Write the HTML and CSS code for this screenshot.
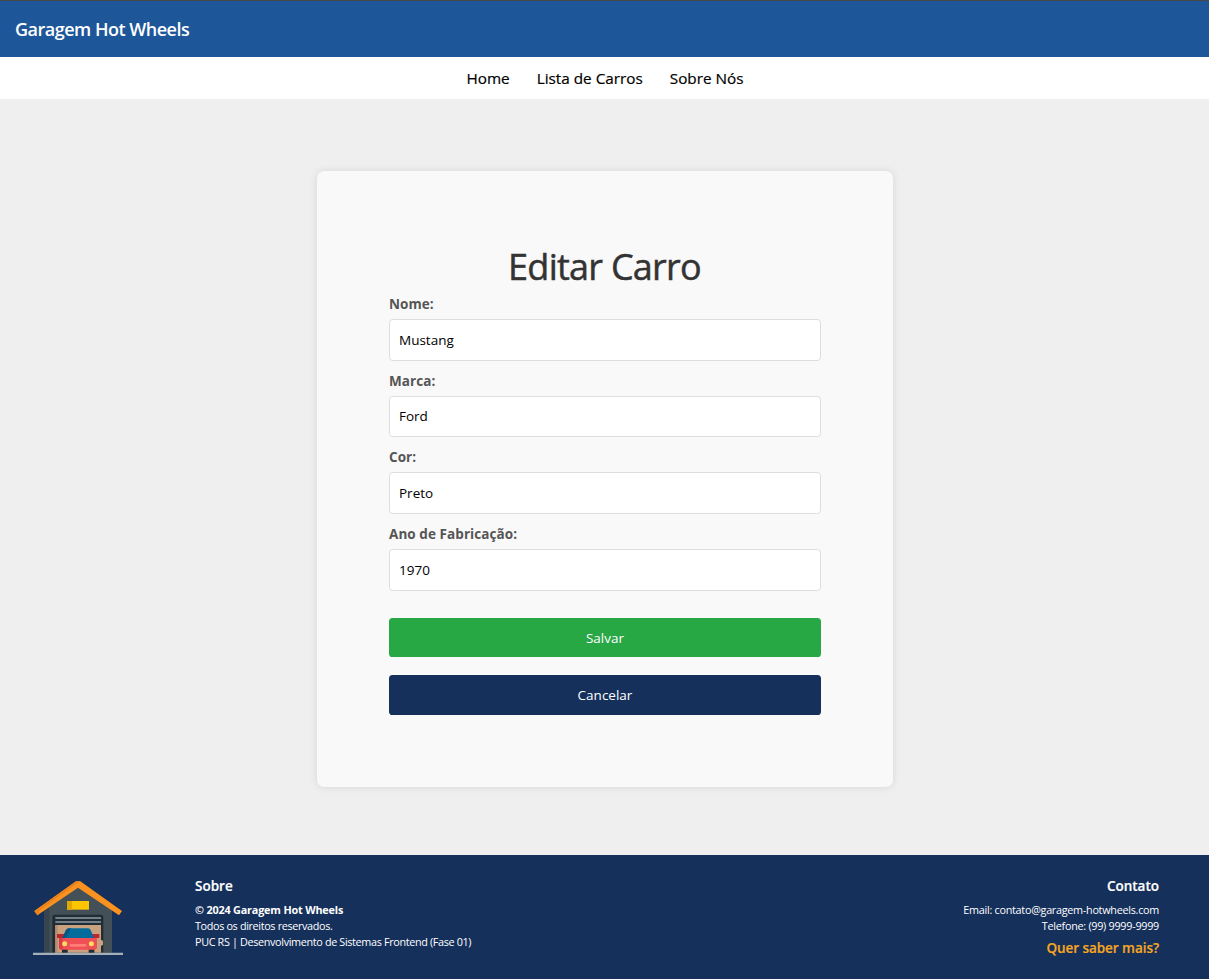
FILE: index.html
```html
<!DOCTYPE html>
<html lang="pt-BR">
<head>
<meta charset="utf-8">
<title>Garagem Hot Wheels</title>
<link rel="stylesheet" href="styles.css">
</head>
<body>
<header class="topbar"><span class="brand">Garagem Hot Wheels</span></header>
<nav class="nav">
  <a>Home</a>
  <a>Lista de Carros</a>
  <a>Sobre Nós</a>
</nav>
<main class="main">
  <form class="card">
    <h1 class="title">Editar Carro</h1>
    <div class="field"><label class="label" for="nome">Nome:</label><input class="input" id="nome" value="Mustang"></div>
    <div class="field"><label class="label" for="marca">Marca:</label><input class="input" id="marca" value="Ford"></div>
    <div class="field"><label class="label" for="cor">Cor:</label><input class="input" id="cor" value="Preto"></div>
    <div class="field"><label class="label" for="ano">Ano de Fabricação:</label><input class="input" id="ano" value="1970"></div>
    <button class="btn btn-save" type="button">Salvar</button>
    <button class="btn btn-cancel" type="button">Cancelar</button>
  </form>
</main>
<footer class="footer">
  <svg class="logo" viewBox="39 33 270 225">
    <path fill="#445058" d="M73 248V116L174 44L276 116V248Z"/>
    <path fill="#36444d" d="M73 248V116L88 105V248Z"/>
    <path fill="#222c35" d="M97 248V141Q97 134 104 134H243Q250 134 250 141V248Z"/>
    <path fill="#c9a17f" d="M106 165H243V210L249 212V224L243 228V248H106Z"/>
    <path fill="#b58d70" d="M106 165H113V248H106Z"/>
    <path fill="#737f8a" d="M106 141H243V147H106ZM106 153H243V159H106Z"/>
    <path fill="#ffc400" d="M141 93H207V119H141Z"/>
    <path fill="#dfa900" d="M141 93H156V119H141Z"/>
    <path fill="#fb921f" d="M174 32L181 34L306 123L297 136L174 53L52 136L43 123L168 34Z"/>
    <path fill="#e7821c" d="M43 123L168 34L174 32L179 34L56 123L60 130L52 136Z"/>
    <path fill="#222c35" d="M126 235H143V249H126ZM206 235H223V249H206Z"/>
    <path fill="#bd2630" d="M111 192H238V204H111Z"/>
    <path fill="#f04f55" d="M117 204H231V232Q231 239 224 239H124Q117 239 117 232Z"/>
    <path fill="#d93e48" d="M117 204H128V239H124Q117 239 117 232Z"/>
    <path fill="#046c9d" d="M127 204L138 180Q141 175 147 175H204Q210 175 212 180L222 204Z"/>
    <path fill="#065782" d="M127 204L138 180Q141 175 147 175H153L138 204Z"/>
    <circle fill="#ffdc63" cx="134" cy="221" r="7.5"/><circle fill="#ffdc63" cx="214" cy="221" r="7.5"/>
    <rect fill="#ff7f78" x="149" y="222" width="50" height="8" rx="4"/>
    <path fill="#a5afb5" d="M39 248H309V255H39Z"/>
  </svg>
  <section class="about">
    <h2 class="heading">Sobre</h2>
    <p class="line copy">© 2024 Garagem Hot Wheels</p>
    <p class="line">Todos os direitos reservados.</p>
    <p class="line">PUC RS | Desenvolvimento de Sistemas Frontend (Fase 01)</p>
  </section>
  <section class="contact">
    <h2 class="heading">Contato</h2>
    <p class="line">Email: contato@garagem-hotwheels.com</p>
    <p class="line">Telefone: (99) 9999-9999</p>
    <a class="more">Quer saber mais?</a>
  </section>
</footer>
</body>
</html>
```
FILE: styles.css
```css
* { box-sizing: border-box; }
body {
  margin: 0;
  height: 979px;
  display: flex;
  flex-direction: column;
  overflow: hidden;
  background: #efefef;
  font-family: "Open Sans", "Noto Sans", sans-serif;
  font-size: 14.4px;
}
h1, h2, p { margin: 0; }
.topbar {
  height: 57px;
  flex: none;
  border-top: 1px solid #474747;
  background: #1e5799;
  color: #fff;
  padding: 0 15px;
  display: flex;
  align-items: center;
}
.brand { font-size: 18px; font-weight: 600; letter-spacing: -0.5px; }
.nav {
  height: 42px;
  flex: none;
  background: #fff;
  display: flex;
  justify-content: center;
  align-items: center;
  gap: 27px;
  padding-left: 1px;
  font-size: 15.3px;
  color: #000;
  -webkit-text-stroke: 0.2px;
}
.main {
  height: 756px;
  flex: none;
  padding-top: 72px;
  display: flex;
  justify-content: center;
  align-items: flex-start;
}
.card {
  width: 576px;
  height: 616px;
  padding: 72px;
  border-radius: 7.2px;
  background: #f9f9f9;
  box-shadow: 0 0 9px rgba(0, 0, 0, 0.1);
}
.title {
  height: 50px;
  line-height: 48px;
  text-align: center;
  font-size: 36px;
  font-weight: 400;
  letter-spacing: -0.75px;
  color: #333;
  -webkit-text-stroke: 0.5px;
}
.field { height: 76.65px; }
.label {
  display: block;
  height: 26px;
  line-height: 22px;
  padding-left: 0.5px;
  font-size: 13.5px;
  font-weight: 700;
  letter-spacing: 0.07px;
  color: #555;
}
.input {
  display: block;
  width: 100%;
  height: 41.6px;
  padding: 0 9.5px;
  border: 1px solid #ddd;
  border-radius: 3.6px;
  background: #fff;
  color: #000;
  font: 400 13.5px "Open Sans", "Noto Sans", sans-serif;
}
.btn {
  display: block;
  width: 100%;
  height: 39.6px;
  padding: 0 0 0 1px;
  border: 0;
  border-radius: 3.6px;
  color: #fff;
  font: 400 13.5px "Open Sans", "Noto Sans", sans-serif;
}
.btn-save { margin-top: 18.2px; background: #28a745; }
.btn-cancel { margin-top: 17.6px; background: #15305b; }
.footer {
  height: 124px;
  flex: none;
  background: #15305b;
  color: #fff;
  display: flex;
  padding: 20px 50px 0 33px;
}
.logo { width: 90px; height: 75px; margin-top: 6px; flex: none; }
.about { margin-left: 72px; }
.contact { margin-left: auto; text-align: right; }
.heading {
  height: 27px;
  line-height: 22px;
  font-size: 13.5px;
  font-weight: 600;
  -webkit-text-stroke: 0.2px;
}
.line {
  height: 16px;
  line-height: 16px;
  font-size: 10.8px;
  letter-spacing: -0.34px;
  white-space: nowrap;
}
.contact .line { letter-spacing: -0.27px; }
.about .copy { font-weight: 700; letter-spacing: -0.17px; }
.more {
  display: block;
  margin-top: 2px;
  line-height: 24px;
  font-size: 13.5px;
  font-weight: 600;
  letter-spacing: -0.05px;
  color: #f5a623;
  -webkit-text-stroke: 0.2px;
}
```
